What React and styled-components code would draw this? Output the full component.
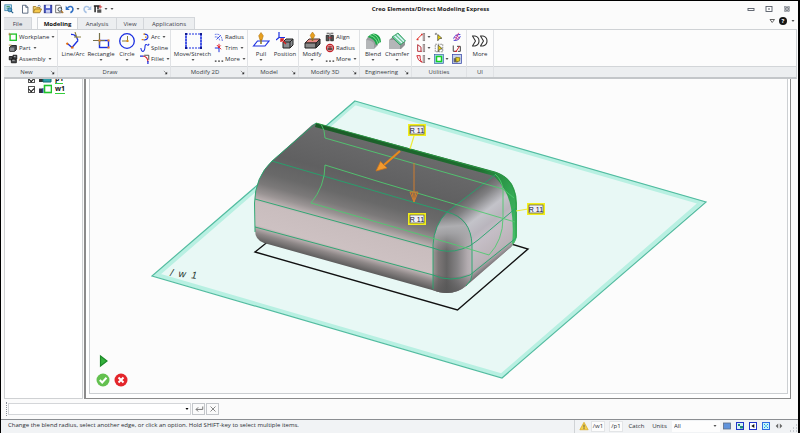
import React from "react";
import styled, { createGlobalStyle } from "styled-components";

const GlobalStyle = createGlobalStyle`
  * { box-sizing: border-box; }
  body {
    margin: 0;
    background: #000;
    font-family: "Open Sans", "Noto Sans", sans-serif;
    font-size: 6px;
    line-height: 8px;
    color: #2a2d33;
  }
  button, input, select {
    margin: 0;
    padding: 0;
    border: 0;
    background: none;
    color: inherit;
    font: inherit;
  }
`;

const Caret = ({ color = "#555" }) => (
  <CaretSvg viewBox="0 0 6 4">
    <path d="M1.500 1h3L3 3z" fill={color} />
  </CaretSvg>
);

/* ---------- quick access icons ---------- */

const quick = [
  {
    name: "Application",
    gap: 6,
    art: (
      <>
        <rect x="1" y="1" width="8" height="7" fill="#bfe0ee" stroke="#3f86ad" />
        <path d="M3 3h4M3 5h3" stroke="#2b8a57" />
        <circle cx="7" cy="7" r="2.400" fill="#5aa7cf" stroke="#1f5f8c" />
        <path d="M8.500 8.500l2.500 2.500" stroke="#1f5f8c" strokeWidth="1.400" />
      </>
    ),
  },
  {
    name: "New",
    gap: 2,
    art: <path d="M3 1.500h4l2.500 2.500v7H3zM7 1.500V4h2.500" fill="#fff" stroke="#44566f" />,
  },
  {
    name: "Open",
    gap: 1,
    art: (
      <>
        <path d="M1.500 10V3h3l1 1h4v2" fill="#f0d070" stroke="#9b7420" />
        <path d="M1.500 10.500l2-4.500h8l-2.200 4.500z" fill="#f6c94c" stroke="#9b7420" />
        <path d="M7 2.200q2-1.500 3.500.8" fill="none" stroke="#4b6da8" />
      </>
    ),
  },
  {
    name: "Save",
    gap: 1,
    art: (
      <>
        <rect x="1.500" y="1.500" width="9" height="9" fill="#4656c8" stroke="#27328c" />
        <rect x="3.500" y="1.500" width="5" height="3.500" fill="#eef1ff" />
        <rect x="3.500" y="7" width="5" height="3.500" fill="#c9d0f2" />
      </>
    ),
  },
  {
    name: "Preview",
    gap: 1,
    art: (
      <>
        <path d="M2 1.500h5l2 2v7H2z" fill="#fff" stroke="#555" />
        <circle cx="7" cy="6.500" r="2.300" fill="#dcebf7" stroke="#333" />
        <path d="M8.600 8.200l2.400 2.500" stroke="#b07830" strokeWidth="1.600" />
      </>
    ),
  },
  {
    name: "Undo",
    gap: 1,
    caret: true,
    art: (
      <>
        <path d="M3 4.500q5-3.500 6.500 1q.5 3-3 5" fill="none" stroke="#2f6fc4" strokeWidth="1.800" />
        <path d="M.8 2.200v5h5z" fill="#2f6fc4" />
      </>
    ),
  },
  {
    name: "Redo",
    gap: 1,
    art: (
      <>
        <path d="M9 4.500q-5-3.500-6.500 1q-.5 3 3 5" fill="none" stroke="#a9c3e4" strokeWidth="1.800" />
        <path d="M11.200 2.200v5h-5z" fill="#a9c3e4" />
      </>
    ),
  },
  {
    name: "Selection filter",
    gap: 0,
    caret: true,
    art: (
      <>
        <path d="M1 2.500h7M2.500 2.500V10M6 2.500V6" stroke="#222" strokeWidth="1.800" fill="none" />
        <path d="M5 6.500h5v4H5z" fill="#555" />
        <path d="M8.500 1v4.500M7 3.500h4" stroke="#c4282a" />
      </>
    ),
  },
];

/* ---------- ribbon icons ---------- */

const art = {
  lineArc: (
    <>
      <path d="M4 12l4 3.500 6-7" fill="none" stroke="#1b2fe0" strokeWidth="1.300" />
      <path d="M7 2.500q5-.5 7 6" fill="none" stroke="#1b2fe0" strokeWidth="1.300" />
      <path d="M11 0l2 6M10 5h7" stroke="#8a8040" strokeWidth="1.100" />
      <path d="M2.500 11l1.500 1.500M7 15.500h2.500" stroke="#e06a10" strokeWidth="2" />
    </>
  ),
  rectangle: (
    <>
      <rect x="7.500" y="8.500" width="9" height="7" fill="#fff" stroke="#1b2fe0" strokeWidth="1.400" />
      <path d="M1 8.500h12M7.500 1v12" stroke="#77724a" strokeWidth="1.200" />
      <path d="M6.500 8.500h2M15.500 15.500h2M15.500 8.500h2" stroke="#f08020" strokeWidth="2" />
    </>
  ),
  circle: (
    <>
      <circle cx="9" cy="9" r="7.300" fill="none" stroke="#1b2fe0" strokeWidth="1.300" />
      <path d="M4 9h6M9.500 4v6" stroke="#8a8040" />
      <path d="M8.500 9h2" stroke="#e08a10" strokeWidth="2" />
    </>
  ),
  move: (
    <>
      <rect x="2" y="2" width="15" height="14" fill="none" stroke="#1b2fe0" strokeWidth="1.200" strokeDasharray="2 1" />
      <path d="M2 2v14M17 2v14" fill="none" stroke="#1b2fe0" />
      <path d="M1 2h2M16 2h2M1 16h2M16 16h2" stroke="#10188c" strokeWidth="2" />
    </>
  ),
  pull: (
    <>
      <path d="M1.500 14l4-5h11.500l-4 5z" fill="#fff" stroke="#1b2fe0" strokeWidth="1.200" />
      <path d="M9 12V4" stroke="#8a7420" strokeWidth="1.500" />
      <path d="M9 .5l2.300 3.300L10 8H8L6.700 3.800z" fill="#e8a020" stroke="#a36a08" strokeWidth=".5" />
    </>
  ),
  position: (
    <>
      <path d="M7 10l3-3h7v6l-3 3H7z" fill="#8a8d90" stroke="#222" />
      <path d="M7 10h7v6M14 10l3-3" fill="none" stroke="#222" />
      <path d="M3 0v5.500M3 5.500L0 8M3 5.500h6" stroke="#1b2fe0" strokeWidth="1.200" />
      <path d="M10 12L5 7M5 10V7h3" fill="none" stroke="#d82020" strokeWidth="1.400" />
    </>
  ),
  modify: (
    <>
      <path d="M2 11l4-4h11l-4 4z" fill="#e58a84" stroke="#433" />
      <path d="M2 11h11v5H2z" fill="#8a8a8a" stroke="#222" />
      <path d="M13 11l4-4v5l-4 4z" fill="#555" stroke="#222" />
      <path d="M9.500 9V3" stroke="#8a7420" strokeWidth="1.500" />
      <path d="M9.500 0l2.300 3.300-1.300 3h-2l-1.300-3z" fill="#e8a020" stroke="#a36a08" strokeWidth=".5" />
    </>
  ),
  blend: (
    <>
      <path d="M2 8q1-3 4-4l8 6v3l-4 4-8-1z" fill="#9a9c9e" />
      <path d="M2 8q6 0 8 4v5H2z" fill="#b4b6b8" />
      <path d="M3.500 5Q8 0 12 2q5 2 5 8l-5 3q-1-6-8.500-8z" fill="#1fa64a" />
      <path d="M6 3.500q6 1.500 8 8.500M8.500 2q6 2 7 9" fill="none" stroke="#9be8a8" strokeWidth=".8" />
    </>
  ),
  chamfer: (
    <>
      <path d="M1 8l6-5 10 7v3l-4 4H1z" fill="#909294" />
      <path d="M1 8h5l6 5v4H1z" fill="#b4b6b8" />
      <path d="M4 5l6-4 7.500 8-5.500 4z" fill="#6fc795" stroke="#2a9a60" strokeWidth=".8" />
      <path d="M6.500 4l7.500 7M9 2.500l7 7" stroke="#dff6ff" strokeWidth="1.200" />
    </>
  ),
  more: (
    <path
      d="M1.500 4h2.500q4 1 4 5t-4 5H1.500l3-5zM9.500 4H12q4 1 4 5t-4 5H9.500l3-5z"
      fill="#fff"
      stroke="#333"
      strokeWidth="1.100"
      strokeLinejoin="round"
    />
  ),
  workplane: (
    <>
      <rect x="2.500" y="2.500" width="7.500" height="7.500" fill="#fff" stroke="#22c32c" strokeWidth="1.600" />
      <path d="M1 3h3M1.500 1v3" stroke="#a08030" />
    </>
  ),
  part: (
    <>
      <path d="M2 5l2-2h6v5l-2 2H2z" fill="#4a4c50" stroke="#111" />
      <path d="M2.500 5.500h5v4h-5z" fill="#8c8f93" />
      <path d="M1 2.500h3" stroke="#b08a20" />
    </>
  ),
  assembly: (
    <>
      <path d="M1.500 3h4v4h-4zM6 1.500h4.500V6H6zM4 6.500h6v4H4z" fill="#4b4d50" stroke="#111" />
      <path d="M5 7.500h3M7 3h2" stroke="#c5c8cb" />
    </>
  ),
  arc: (
    <>
      <path d="M5 2.500q5 0 4.500 4-1 3.500-5 3" fill="none" stroke="#1b2fe0" strokeWidth="1.400" />
      <path d="M4 2.500h2M2 9h2.500M6 6h2" stroke="#e08a10" strokeWidth="1.500" />
    </>
  ),
  spline: (
    <path d="M1 6q1 5 3 4t2-6q.500-3 2-2t2 .5l1-1.500" fill="none" stroke="#1b2fe0" strokeWidth="1.300" />
  ),
  fillet: (
    <>
      <path d="M3.500 2.500q6 1 6 7" fill="none" stroke="#d8202a" strokeWidth="1.300" />
      <path d="M0 2.500h4M9.500 8.500V12" stroke="#1b2fe0" strokeWidth="1.500" />
      <path d="M5 1.500h5.500V7" fill="none" stroke="#333" />
    </>
  ),
  radius2d: (
    <>
      <path d="M1 3q8-2 9 8M1 6q5-1 6 5" fill="none" stroke="#3a4fe0" strokeDasharray="2 1" />
      <path d="M3 9l5-5" stroke="#1b2fe0" />
    </>
  ),
  trim: (
    <>
      <path d="M6 6v5M1 6h5" stroke="#1b2fe0" strokeWidth="1.200" />
      <path d="M6 1v5M3.500 2.500l5 5M8 3L5 6" stroke="#e0202a" strokeWidth="1.200" />
    </>
  ),
  dots: <path d="M1 8.500h2M5 8.500h2M9 8.500h2" stroke="#333" strokeWidth="1.600" />,
  align: (
    <>
      <path d="M1.500 4h3v6.500h-3zM7 4h3v6.500H7z" fill="#555" stroke="#222" />
      <path d="M2 1.500h3M7 1.500h3M6 1v10" stroke="#333" />
      <path d="M4 7h4" stroke="#d8202a" />
    </>
  ),
  radius3d: (
    <>
      <circle cx="6" cy="6" r="4.300" fill="#efc1c1" stroke="#c42028" strokeWidth="1.400" />
      <path d="M3 5.500h6v3H3z" fill="#555" />
      <path d="M6 3v6M3 4.500h6" stroke="#a01820" />
    </>
  ),
  measure: (
    <>
      <path d="M1 9l6-6" stroke="#e0302a" strokeWidth="1.200" />
      <path d="M1 9h2M6 3h2" stroke="#e0302a" strokeWidth="2" />
      <rect x="8.500" y="2" width="2" height="8.500" fill="#d8b8b8" stroke="#777" strokeWidth=".7" />
    </>
  ),
  measure2: (
    <>
      <path d="M2 2v8h5M2 2l4 3v5" fill="none" stroke="#b0202a" strokeWidth="1.100" />
      <rect x="8.500" y="2" width="2" height="8.500" fill="#d8b8b8" stroke="#777" strokeWidth=".7" />
    </>
  ),
  measure3: (
    <>
      <path d="M1 2h4v3q0 4 3 5M1 2q1 6 6 8" fill="none" stroke="#d0202a" strokeWidth="1.100" />
      <rect x="8.500" y="2" width="2" height="8.500" fill="#d8b8b8" stroke="#777" strokeWidth=".7" />
    </>
  ),
  pick: (
    <>
      <path d="M4.500 3l5 4.500-3 .5-2 2.500z" fill="#f1d80f" stroke="#333" strokeWidth=".8" />
      <path d="M1 2.500h2M2.500 1v2" stroke="#555" />
    </>
  ),
  pickBox: (
    <>
      <rect x="1.500" y="1.500" width="9" height="9" fill="none" stroke="#777" strokeDasharray="2 1" />
      <path d="M5 2.500l5 4.500-3 .5-2 3z" fill="#f1d80f" stroke="#333" strokeWidth=".8" />
    </>
  ),
  greenBox: (
    <>
      <rect x=".7" y=".7" width="10.600" height="10.600" fill="#a6d4f0" stroke="#3060a0" strokeWidth=".8" />
      <rect x="3" y="3" width="6" height="6" fill="#fff" stroke="#18d024" strokeWidth="1.800" />
    </>
  ),
  swirl: (
    <>
      <path d="M2 8q1-5 8-5M2 10q6 1 8-5" fill="none" stroke="#4040d8" strokeWidth="1.200" />
      <path d="M3 6l5 3M5 3l4 5M8 1L4 10" stroke="#c83090" />
    </>
  ),
  angle: (
    <>
      <path d="M1.500 3v7H5M6 4h4v6H7" fill="none" stroke="#444" strokeWidth="1.200" />
      <path d="M5 10l4-6M3 10h3" stroke="#d8202a" strokeWidth="1.200" />
    </>
  ),
  snapshot: (
    <>
      <rect x=".7" y=".7" width="10.600" height="10.600" fill="#c8d4ee" stroke="#3848a8" strokeWidth=".9" />
      <path d="M2 5h5v5H2z" fill="#666" />
      <path d="M4.500 4l5 .5-.5 4-4 1z" fill="#e4cc20" stroke="#5a5210" strokeWidth=".7" />
    </>
  ),
};

const Big = ({ icon, label, caret, w }) => (
  <BigButton type="button" $w={w}>
    <BigIcon viewBox="0 0 18 18">{art[icon]}</BigIcon>
    <span>{label}</span>
    {caret && <Caret />}
  </BigButton>
);

const Small = ({ icon, label, caret }) => (
  <SmallButton type="button">
    <SmallIcon viewBox="0 0 12 12">{art[icon]}</SmallIcon>
    <span>{label}</span>
    {caret && <Caret />}
  </SmallButton>
);

const Util = ({ icon, name, caret }) => (
  <UtilButton type="button" aria-label={name}>
    <SmallIcon viewBox="0 0 12 12">{art[icon]}</SmallIcon>
    {caret && <Caret />}
  </UtilButton>
);

const Group = ({ title, w, launcher, children }) => (
  <GroupBox $w={w}>
    <GroupBody>{children}</GroupBody>
    <GroupTitle $launcher={launcher}>
      <span>{title}</span>
      {launcher && (
        <Launcher type="button" aria-label={`${title} options`}>
          <LauncherIcon viewBox="0 0 6 6">
            <path d="M1 1l3 3" stroke="#888" />
            <path d="M5 2v3H2z" fill="#333" />
          </LauncherIcon>
        </Launcher>
      )}
    </GroupTitle>
  </GroupBox>
);

const Tag = ({ x, y }) => (
  <g>
    <rect x={x} y={y} width="16" height="10" fill="#f1f0f8" stroke="#f2ee1c" strokeWidth="2" />
    <rect x={x + 1} y={y + 1} width="14" height="8" fill="none" stroke="#55553c" strokeWidth=".7" />
    <text x={x + 8} y={y + 7.500} textAnchor="middle" fontSize="7" fontFamily="Liberation Sans, sans-serif" fill="#14143a">
      R 11
    </text>
  </g>
);

const Scene = () => (
  <SceneSvg viewBox="90 79 697 314" role="img" aria-label="3D model">
    <defs>
      <linearGradient id="body" gradientUnits="userSpaceOnUse" x1="300" y1="118" x2="265" y2="245">
        <stop offset="0" stopColor="#6b6b6c" />
        <stop offset=".32" stopColor="#606061" />
        <stop offset=".47" stopColor="#696969" />
        <stop offset=".56" stopColor="#7b7979" />
        <stop offset=".63" stopColor="#9a9494" />
        <stop offset=".7" stopColor="#c9bdbe" />
        <stop offset=".87" stopColor="#cdc1c2" />
        <stop offset=".93" stopColor="#8d8787" />
        <stop offset="1" stopColor="#555" />
      </linearGradient>
      <linearGradient id="corner" gradientUnits="userSpaceOnUse" x1="432" y1="0" x2="474" y2="0">
        <stop offset="0" stopColor="#a39b9b" />
        <stop offset=".15" stopColor="#7d7878" />
        <stop offset=".35" stopColor="#656464" />
        <stop offset=".6" stopColor="#858385" />
        <stop offset=".85" stopColor="#b3acb0" />
        <stop offset="1" stopColor="#c1b9be" />
      </linearGradient>
      <linearGradient id="side" gradientUnits="userSpaceOnUse" x1="447" y1="212" x2="491" y2="269">
        <stop offset="0" stopColor="#666667" />
        <stop offset=".12" stopColor="#7f7f81" />
        <stop offset=".32" stopColor="#c3c3c9" />
        <stop offset=".48" stopColor="#b9b5bd" />
        <stop offset=".6" stopColor="#c5bec6" />
        <stop offset=".86" stopColor="#bab2b7" />
        <stop offset=".94" stopColor="#858083" />
        <stop offset="1" stopColor="#5a5a5a" />
      </linearGradient>
      <linearGradient id="cornerCap" gradientUnits="userSpaceOnUse" x1="446" y1="211" x2="449" y2="252">
        <stop offset="0" stopColor="#6c6c6d" />
        <stop offset=".38" stopColor="#aeaeb1" />
        <stop offset=".55" stopColor="#a9a9ac" stopOpacity=".85" />
        <stop offset="1" stopColor="#a0a0a2" stopOpacity="0" />
      </linearGradient>
      <linearGradient id="cornerFoot" x1="0" y1="0" x2="0" y2="1">
        <stop offset="0" stopColor="#444" stopOpacity="0" />
        <stop offset="1" stopColor="#555" stopOpacity=".8" />
      </linearGradient>
      <linearGradient id="strip" gradientUnits="userSpaceOnUse" x1="316" y1="123" x2="517" y2="240">
        <stop offset="0" stopColor="#1c5a28" />
        <stop offset=".7" stopColor="#1e6e30" />
        <stop offset=".85" stopColor="#2fa04e" />
        <stop offset="1" stopColor="#45c069" />
      </linearGradient>
    </defs>

    <path d="M355 101L706 202L502 378L152 276Z" fill="#e8f8f5" />
    <path d="M355 103L701 202.500L501.500 375.500L157 275Z" fill="none" stroke="#b8f0e2" strokeWidth="4" />
    <path d="M355 101L706 202L502 378L152 276Z" fill="none" stroke="#52bca0" strokeWidth="1.200" />

    <path d="M275 236L255 252L457.500 310L528 249L505 242" fill="none" stroke="#111" strokeWidth="1.400" />

    {/* solid */}
    <path
      d="M316 123L497 173Q516 179 516 204V236Q516 242 511 247L466 286Q457 293 447 293Q439 293 432 290L264 243Q255 240 255 230L254.500 203Q255 177 272 161L312 125Z"
      fill="url(#body)"
    />
    <path
      d="M447 212L495 174Q516 180 516 204V236Q516 242 511 247L466 286Q472 281 472 270V245Q471 217 447 212Z"
      fill="url(#side)"
    />
    <path d="M433 290V245Q435 224 447 212Q471 218 472 245V272Q472 280 466 286Q458 293 447 293Q439 293 433 290Z" fill="url(#corner)" />
    <path d="M433 272Q450 283 472 272V274Q472 280 466 286Q458 293 447 293Q439 293 433 290Z" fill="url(#cornerFoot)" />
    <path d="M433 252V245Q435 224 447 212Q471 218 472 245V252Z" fill="url(#cornerCap)" />
    <path d="M316 123L495 171.500Q516 178 517 203V236Q516 242 512 245Q514 225 511 208Q508 190 494 176L315 127Z" fill="url(#strip)" />

    <g fill="none" stroke="#22a56c" strokeWidth=".9">
      <path d="M316 123L272 161Q255 177 254.500 203L255 232" />
      <path d="M272 161L447 212L495 175" />
      <path d="M255 199L433 248Q447 254 462 249Q470 247 478 240L516 208" />
      <path d="M255 227L433 275Q450 283 470 275L516 238" />
      <path d="M433 289V245Q434 225 447 212Q471 218 472 245V275Q472 280 466 286" />
    </g>
    <g fill="none" stroke="#4fc96f" strokeWidth=".9">
      <path d="M321 124Q325 130 325 138L503 189L514 198" />
      <path d="M311 203Q325 186 325 165L380 182L515 222" />
      <path d="M311 203L463 247L489 255Q503 240 503 218V190Q502 180 495 174" />
      <path d="M316 123L497 173Q516 180 516 204V238" stroke="#2c9a45" />
    </g>

    {/* direction handles */}
    <path d="M400 151L384 165" stroke="#e98a1c" strokeWidth="2.200" />
    <path d="M376 171L380.500 161.500L387 168Z" fill="#f39a2e" stroke="#c8741e" strokeWidth=".8" />
    <path d="M414 163V202M410 192H418L414 202ZM412 192L414 202L416 192" fill="none" stroke="#cf7d2e" strokeWidth="1" />

    <path d="M414 136L410 149M516 211L528 209" stroke="#eeea3a" strokeWidth="1.200" />
    <Tag x={409} y={125} />
    <Tag x={409} y={214} />
    <Tag x={528} y={204} />

    <text x="170" y="276" transform="rotate(6 170 276)" fontSize="10" fontStyle="italic" fontFamily="Liberation Sans, sans-serif" fill="#1c2f2b" xmlSpace="preserve">
      /  w  1
    </text>
  </SceneSvg>
);

const App = () => (
  <Page>
    <GlobalStyle />
    <TitleBar>
      <Quick>
        {quick.map((q) => (
          <QuickButton key={q.name} type="button" aria-label={q.name} $gap={q.gap}>
            <SmallIcon viewBox="0 0 12 12">{q.art}</SmallIcon>
            {q.caret && <Caret />}
          </QuickButton>
        ))}
        <QuickButton type="button" aria-label="Customize" $gap={0}>
          <Caret />
        </QuickButton>
      </Quick>
      <Title>Creo Elements/Direct Modeling Express</Title>
      <WindowButtons>
        <button type="button" aria-label="Minimize">
          <TinyIcon viewBox="0 0 8 8">
            <rect x="1" y="3.500" width="6" height="2" fill="#fff" stroke="#555b66" strokeWidth=".9" />
          </TinyIcon>
        </button>
        <button type="button" aria-label="Restore">
          <TinyIcon viewBox="0 0 8 8">
            <rect x="1" y="1.500" width="6" height="5" fill="#fff" stroke="#555b66" strokeWidth=".9" />
            <path d="M3 4h2" stroke="#555b66" />
          </TinyIcon>
        </button>
        <button type="button" aria-label="Close">
          <TinyIcon viewBox="0 0 8 8">
            <path d="M2 2l4 4M6 2L2 6" stroke="#666b75" strokeWidth="1.800" />
            <path d="M2 2l4 4M6 2L2 6" stroke="#fff" strokeWidth=".5" />
            <rect x="1.500" y="1.500" width="5" height="5" fill="none" stroke="#8a8f98" strokeWidth=".6" />
          </TinyIcon>
        </button>
      </WindowButtons>
    </TitleBar>

    <TabRow>
      <FileTab type="button">File</FileTab>
      <Tab type="button" $w={41} $active>Modeling</Tab>
      <Tab type="button" $w={39}>Analysis</Tab>
      <Tab type="button" $w={27}>View</Tab>
      <Tab type="button" $w={51}>Applications</Tab>
      <Help>
        <button type="button" aria-label="Collapse ribbon">
          <TinyIcon viewBox="0 0 8 8">
            <path d="M2 2.500h4.500L4.200 5.500z" fill="#fff" stroke="#555" strokeWidth=".9" />
          </TinyIcon>
        </button>
        <HelpButton type="button" aria-label="Help">?</HelpButton>
        <Caret />
      </Help>
    </TabRow>

    <Ribbon>
      <Group title="New" w={54} launcher>
        <Stack>
          <Small icon="workplane" label="Workplane" caret />
          <Small icon="part" label="Part" caret />
          <Small icon="assembly" label="Assembly" caret />
        </Stack>
      </Group>
      <Group title="Draw" w={113} launcher>
        <Big icon="lineArc" label="Line/Arc" w={26} />
        <Big icon="rectangle" label="Rectangle" caret w={30} />
        <Big icon="circle" label="Circle" caret w={22} />
        <Stack>
          <Small icon="arc" label="Arc" caret />
          <Small icon="spline" label="Spline" />
          <Small icon="fillet" label="Fillet" caret />
        </Stack>
      </Group>
      <Group title="Modify 2D" w={77} launcher>
        <Big icon="move" label="Move/Stretch" caret w={39} />
        <Stack>
          <Small icon="radius2d" label="Radius" />
          <Small icon="trim" label="Trim" caret />
          <Small icon="dots" label="More" caret />
        </Stack>
      </Group>
      <Group title="Model" w={51} launcher>
        <Big icon="pull" label="Pull" caret w={22} />
        <Big icon="position" label="Position" w={26} />
      </Group>
      <Group title="Modify 3D" w={61} launcher>
        <Big icon="modify" label="Modify" caret w={22} />
        <Stack>
          <Small icon="align" label="Align" />
          <Small icon="radius3d" label="Radius" />
          <Small icon="dots" label="More" caret />
        </Stack>
      </Group>
      <Group title="Engineering" w={52} launcher>
        <Big icon="blend" label="Blend" caret w={22} />
        <Big icon="chamfer" label="Chamfer" caret w={26} />
      </Group>
      <Group title="Utilities" w={55}>
        <UtilGrid>
          <Util icon="measure" name="Measure distance" caret />
          <Util icon="pick" name="Pick" />
          <Util icon="swirl" name="Dynamic view" />
          <Util icon="measure2" name="Measure edge" caret />
          <Util icon="pickBox" name="Box pick" />
          <Util icon="angle" name="Angle" />
          <Util icon="measure3" name="Measure face" caret />
          <Util icon="greenBox" name="Workplane display" caret />
          <Util icon="snapshot" name="Part display" />
        </UtilGrid>
      </Group>
      <Group title="UI" w={27}>
        <Big icon="more" label="More" w={22} />
      </Group>
      <RibbonRest />
    </Ribbon>

    <Main>
      <Tree>
        <TreeItem>
          <Check type="checkbox" id="p1" defaultChecked />
          <TreeIcon viewBox="0 0 14 10">
            <path d="M1 4h4v4H1z" fill="#333" />
            <path d="M5 3h8v5H5z" fill="#2f9fa8" stroke="#156a72" />
          </TreeIcon>
          <TreeLabel htmlFor="p1">p1</TreeLabel>
        </TreeItem>
        <TreeItem>
          <Check type="checkbox" id="w1" defaultChecked />
          <TreeIcon viewBox="0 0 14 10">
            <path d="M1 4.500h4V9H1z" fill="#334" />
            <path d="M5 4v5" stroke="#2a48c8" />
            <rect x="6.500" y="1.500" width="7" height="7" fill="#fff" stroke="#20c42a" strokeWidth="1.600" />
          </TreeIcon>
          <TreeLabel htmlFor="w1">w1</TreeLabel>
        </TreeItem>
      </Tree>
      <ViewFrame>
        <Viewport>
          <Scene />
          <Actions>
            <button type="button" aria-label="Next">
              <RoundIcon viewBox="0 0 14 14">
                <path d="M4.500 2l6.500 5-6.500 5z" fill="#35b23c" stroke="#1d8a28" strokeWidth="1.200" />
              </RoundIcon>
            </button>
            <ActionRow>
              <button type="button" aria-label="Accept">
                <RoundIcon viewBox="0 0 14 14">
                  <circle cx="7" cy="7" r="6.500" fill="#63c04f" />
                  <path d="M3.800 7l2.400 2.500L10.500 4.800" fill="none" stroke="#fff" strokeWidth="2" />
                </RoundIcon>
              </button>
              <button type="button" aria-label="Cancel">
                <RoundIcon viewBox="0 0 14 14">
                  <circle cx="7" cy="7" r="6.500" fill="#e3262b" />
                  <path d="M4.500 4.500l5 5M9.500 4.500l-5 5" stroke="#fff" strokeWidth="2" />
                </RoundIcon>
              </button>
            </ActionRow>
          </Actions>
        </Viewport>
      </ViewFrame>
    </Main>

    <CommandRow>
      <Combo>
        <ComboInput type="text" aria-label="Command" />
        <button type="button" aria-label="Command history">
          <Caret color="#000" />
        </button>
      </Combo>
      <CommandButton type="button" aria-label="Enter">
        <SmallIcon viewBox="0 0 12 12">
          <path d="M10.500 3v3.500H2.500M5 4L2.500 6.500 5 9" fill="none" stroke="#777" strokeWidth="1.200" />
        </SmallIcon>
      </CommandButton>
      <CommandButton type="button" aria-label="Clear">
        <SmallIcon viewBox="0 0 12 12">
          <path d="M3 3l6 6M9 3L3 9" stroke="#888" strokeWidth="1.200" />
        </SmallIcon>
      </CommandButton>
    </CommandRow>

    <StatusBar>
      <Message>
        Change the blend radius, select another edge, or click an option. Hold SHIFT-key to select multiple items.
      </Message>
      <StatusTools>
        <SmallIcon viewBox="0 0 12 12">
          <path d="M6 1.500l5 9H1z" fill="#f5d24a" stroke="#d6a520" strokeWidth=".8" />
          <path d="M6 4.500v3.500M6 8.600v1.200" stroke="#444" />
        </SmallIcon>
        <StatusBox type="button">/w1</StatusBox>
        <StatusBox type="button">/p1</StatusBox>
        <StatusButton type="button">Catch</StatusButton>
        <StatusButton type="button">Units</StatusButton>
        <SelectBox>
          <select aria-label="Selection filter" defaultValue="All">
            <option>All</option>
          </select>
          <Caret />
        </SelectBox>
        <StatusIcon type="button" aria-label="Window">
          <TinyIcon viewBox="0 0 8 8">
            <rect x=".5" y="1" width="7" height="6" fill="#5f93dc" stroke="#5a6c86" strokeWidth=".8" />
          </TinyIcon>
        </StatusIcon>
        <StatusIcon type="button" aria-label="Shaded view">
          <TinyIcon viewBox="0 0 8 8">
            <rect x=".5" y=".5" width="7" height="7" fill="#d6f2f4" stroke="#2134c8" />
            <path d="M2 2h2v2H2zM4 4h3v2.500H4z" fill="#218a78" />
          </TinyIcon>
        </StatusIcon>
        <StatusIcon type="button" aria-label="Previous view">
          <TinyIcon viewBox="0 0 8 8">
            <rect x=".5" y=".5" width="7" height="7" fill="#fff" stroke="#2134c8" />
            <path d="M5.300 2v4L2.300 4z" fill="#111" />
          </TinyIcon>
        </StatusIcon>
        <StatusIcon type="button" aria-label="Fit">
          <TinyIcon viewBox="0 0 8 8">
            <rect x=".5" y=".5" width="7" height="7" fill="#c8f4fb" stroke="#2e6be0" />
            <path d="M2 2l1.500 1.500M6 2L4.500 3.500M2 6l1.500-1.500M6 6L4.500 4.500" stroke="#18a0d8" />
          </TinyIcon>
        </StatusIcon>
        <StatusIcon type="button" aria-label="Scroll">
          <TinyIcon viewBox="0 0 8 8">
            <path d="M3.200 1.500v5L.7 4zM4.800 1.500v5L7.300 4z" fill="#666" />
          </TinyIcon>
        </StatusIcon>
        <Grip viewBox="0 0 8 8">
          <path d="M6 1h1M6 4h1M3 4h1M6 7h1M3 7h1M0 7h1" stroke="#9aa0a8" />
        </Grip>
      </StatusTools>
    </StatusBar>
  </Page>
);

export default App;

const Page = styled.div`
  display: flex;
  flex-direction: column;
  min-height: 100vh;
  background: #fbfbfb;
  border: 1px solid #000;
  border-right-width: 2px;
  border-bottom-width: 2px;
`;

const CaretSvg = styled.svg`
  display: block;
  flex: none;
  width: 6px;
  height: 4px;
`;

const SmallIcon = styled.svg`
  display: block;
  flex: none;
  width: 10px;
  height: 10px;
`;

const TinyIcon = styled.svg`
  display: block;
  width: 8px;
  height: 8px;
`;

const TitleBar = styled.header`
  display: flex;
  align-items: center;
  height: 16px;
  padding: 0 7px 0 3px;
`;

const Quick = styled.div`
  display: flex;
  flex: 1;
  align-items: center;
`;

const QuickButton = styled.button`
  display: flex;
  align-items: center;
  margin-right: ${({ $gap }) => $gap}px;
`;

const Title = styled.h1`
  margin: 0 0 0 66px;
  font-size: 6px;
  font-weight: 700;
  color: #222;
`;

const WindowButtons = styled.div`
  display: flex;
  flex: 1;
  justify-content: flex-end;
  gap: 10px;
`;

const TabRow = styled.nav`
  display: flex;
  height: 12px;
  padding-left: 3px;
`;

const Tab = styled.button`
  width: ${({ $w }) => $w}px;
  border: 1px solid #d3d6da;
  border-left-width: ${({ $active }) => ($active ? "1px" : "0")};
  border-bottom: 0;
  background: ${({ $active }) => ($active ? "#fdfdfd" : "#eceef0")};
  font-weight: ${({ $active }) => ($active ? 700 : 400)};
  color: ${({ $active }) => ($active ? "#111" : "#3c4047")};
`;

const FileTab = styled(Tab)`
  width: 28px;
  margin-right: 5px;
  background: #e4e6e9;
`;

const Help = styled.div`
  display: flex;
  flex: 1;
  align-items: center;
  justify-content: flex-end;
  gap: 3px;
  padding: 0 2px 4px 0;
`;

const HelpButton = styled.button`
  width: 8px;
  height: 8px;
  border-radius: 50%;
  background: #161616;
  color: #fff;
  font-weight: 700;
`;

const Ribbon = styled.div`
  display: flex;
  height: 50px;
  margin: 0 1px 0 3px;
  border: 1px solid #cfd2d5;
  border-left: 0;
  border-bottom: 2px solid #c3c6c9;
  background: #fcfcfc;
`;

const GroupBox = styled.section`
  display: flex;
  flex: none;
  flex-direction: column;
  width: ${({ $w }) => $w}px;
  border-right: 1px solid #e0e2e5;
`;

const GroupBody = styled.div`
  display: flex;
  flex: 1;
  padding: 1px 2px;
`;

const GroupTitle = styled.div`
  position: relative;
  height: 11px;
  padding-right: ${({ $launcher }) => ($launcher ? "8px" : "0")};
  border-top: 1px solid #d2d5d8;
  background: #eceef0;
  line-height: 10px;
  text-align: center;
  color: #3a3e45;
`;

const Launcher = styled.button`
  position: absolute;
  right: 2px;
  bottom: 2px;
`;

const LauncherIcon = styled.svg`
  display: block;
  width: 5px;
  height: 5px;
`;

const RibbonRest = styled.div`
  flex: 1;
  background: linear-gradient(to top, #eceef0 10px, #d2d5d8 10px, #d2d5d8 11px, transparent 11px);
`;

const BigButton = styled.button`
  display: flex;
  flex: none;
  flex-direction: column;
  align-items: center;
  width: ${({ $w }) => $w}px;
  padding-top: 1px;
  white-space: nowrap;
`;

const BigIcon = styled.svg`
  display: block;
  flex: none;
  width: 18px;
  height: 18px;
`;

const Stack = styled.div`
  display: grid;
  grid-template-rows: repeat(3, 1fr);
  justify-items: start;
  padding-left: 2px;
`;

const SmallButton = styled.button`
  display: flex;
  align-items: center;
  gap: 1px;
  white-space: nowrap;
`;

const UtilGrid = styled.div`
  display: grid;
  flex: 1;
  grid-template-columns: 18px 18px 12px;
  padding-left: 2px;
`;

const UtilButton = styled.button`
  display: flex;
  align-items: center;
`;

const Main = styled.main`
  display: flex;
  flex: 1;
  min-height: 0;
  padding: 0 7px 0 3px;
`;

const Tree = styled.ul`
  flex: none;
  width: 79px;
  margin: 0;
  padding: 0 0 0 23px;
  overflow: hidden;
  list-style: none;
  border: 1px solid #cfd1d3;
  border-top: 0;
  background: #fff;
`;

const TreeItem = styled.li`
  display: flex;
  align-items: center;
  gap: 3px;
  height: 10px;

  &:first-child {
    margin-top: -5px;
  }
`;

const Check = styled.input`
  display: flex;
  align-items: center;
  justify-content: center;
  appearance: none;
  width: 7px;
  height: 7px;
  border: 1px solid #555;
  background: #fff;

  &:checked::before {
    content: "";
    width: 4px;
    height: 3px;
    border: solid #111;
    border-width: 0 0 1px 1px;
    transform: rotate(-45deg);
  }
`;

const TreeIcon = styled.svg`
  display: block;
  width: 14px;
  height: 10px;
`;

const TreeLabel = styled.label`
  border-bottom: 1px solid #35cf3c;
  font-size: 7px;
  font-weight: 700;
  line-height: 8px;
  color: #111;
`;

const ViewFrame = styled.div`
  display: flex;
  flex: 1;
  min-width: 0;
  margin-left: 1px;
  padding: 0 2px 4px 3px;
  border: solid #8b8b8b;
  border-width: 0 1px 1px 2px;
  background: #fff;
`;

const Viewport = styled.div`
  position: relative;
  flex: 1;
  min-width: 0;
  border: 1px solid #cccfd2;
  border-top: 0;
  background: #fcfcfc;
`;

const SceneSvg = styled.svg`
  display: block;
  width: 100%;
  height: 100%;
`;

const Actions = styled.div`
  position: absolute;
  left: 6px;
  bottom: 6px;
`;

const ActionRow = styled.div`
  display: flex;
  gap: 4px;
  margin-top: 3px;
`;

const RoundIcon = styled.svg`
  display: block;
  width: 14px;
  height: 14px;
`;

const CommandRow = styled.div`
  display: flex;
  align-items: center;
  height: 20px;
  margin-left: 5px;

  &::before {
    content: "";
    height: 14px;
    margin-right: 1px;
    border-left: 1px dotted #8a8f98;
  }
`;

const Combo = styled.div`
  display: flex;
  align-items: center;
  width: 183px;
  height: 12px;
  border: 1px solid #d4d6d9;
  background: #fff;
`;

const ComboInput = styled.input`
  flex: 1;
  min-width: 0;
  outline: none;
`;

const CommandButton = styled.button`
  display: flex;
  align-items: center;
  justify-content: center;
  width: 13px;
  height: 12px;
  margin-left: 1px;
  border: 1px solid #c3c6ca;
`;

const StatusBar = styled.footer`
  display: flex;
  align-items: center;
  justify-content: space-between;
  height: 14px;
  padding-left: 7px;
  border-top: 1px solid #8b8e92;
  background: #f1f3f5;
`;

const Message = styled.p`
  margin: 0 0 3px;
  white-space: nowrap;
`;

const StatusTools = styled.div`
  display: flex;
  align-items: center;
  height: 100%;
  padding: 0 0 1px 4px;
  border-left: 1px solid #d0d3d6;
`;

const StatusButton = styled.button`
  width: 23px;
`;

const StatusBox = styled.button`
  width: 14px;
  height: 11px;
  margin: 0 2px;
  border: 1px solid #e3e5e7;
  background: #fcfcfc;
  line-height: 8px;
`;

const SelectBox = styled.div`
  display: flex;
  align-items: center;
  width: 48px;
  height: 11px;
  margin: 0 3px 0 1px;
  padding: 0 2px;
  background: #fdfdfd;

  select {
    flex: 1;
    appearance: none;
    outline: none;
  }
`;

const StatusIcon = styled.button`
  padding-right: 5px;
`;

const Grip = styled.svg`
  width: 8px;
  height: 8px;
  margin-left: 2px;
  align-self: flex-end;
`;
